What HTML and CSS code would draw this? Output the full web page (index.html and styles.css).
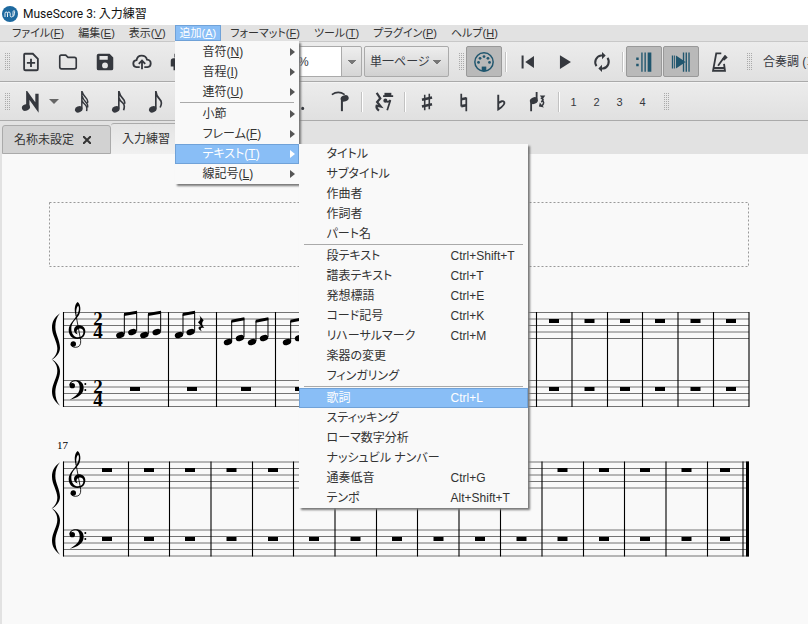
FILE: index.html
```html
<!DOCTYPE html>
<html lang="ja">
<head>
<meta charset="utf-8">
<title>MuseScore 3: 入力練習</title>
<link rel="stylesheet" href="styles.css">
</head>
<body>
<header class="titlebar">
  <svg class="logo" viewBox="0 0 16 16"><circle cx="8" cy="8" r="8" fill="#1d699f"/><path d="M3 11V7.500Q3 6 4.200 6T5.500 7.500V11M5.500 7.500Q5.500 6 6.800 6T8.200 7.500V9.500Q8.200 11 9.500 11T11 9.500V6.500Q11 5 12 4.500Q13 5 12.500 7.500L11.500 10.500" fill="none" stroke="#fff" stroke-width=".9"/></svg>
  <h1>MuseScore 3: 入力練習</h1>
</header>

<nav class="menubar">
  <ul>
    <li><button>ファイル(<u>F</u>)</button></li>
    <li><button>編集(<u>E</u>)</button></li>
    <li><button>表示(<u>V</u>)</button></li>
    <li class="open"><button>追加(<u>A</u>)</button>
      <ul class="menu add-menu">
        <li><button class="more">音符(<u>N</u>)</button></li>
        <li><button class="more">音程(<u>I</u>)</button></li>
        <li><button class="more">連符(<u>U</u>)</button></li>
        <li class="rule"></li>
        <li><button class="more">小節</button></li>
        <li><button class="more">フレーム(<u>F</u>)</button></li>
        <li class="parent"><button class="more active">テキスト(<u>T</u>)</button>
          <ul class="menu text-menu">
            <li><button>タイトル</button></li>
            <li><button>サブタイトル</button></li>
            <li><button>作曲者</button></li>
            <li><button>作詞者</button></li>
            <li><button>パート名</button></li>
            <li class="rule"></li>
            <li><button>段テキスト<kbd>Ctrl+Shift+T</kbd></button></li>
            <li><button>譜表テキスト<kbd>Ctrl+T</kbd></button></li>
            <li><button>発想標語<kbd>Ctrl+E</kbd></button></li>
            <li><button>コード記号<kbd>Ctrl+K</kbd></button></li>
            <li><button>リハーサルマーク<kbd>Ctrl+M</kbd></button></li>
            <li><button>楽器の変更</button></li>
            <li><button>フィンガリング</button></li>
            <li class="rule"></li>
            <li><button class="active">歌詞<kbd>Ctrl+L</kbd></button></li>
            <li><button>スティッキング</button></li>
            <li><button>ローマ数字分析</button></li>
            <li><button>ナッシュビル ナンバー</button></li>
            <li><button>通奏低音<kbd>Ctrl+G</kbd></button></li>
            <li><button>テンポ<kbd>Alt+Shift+T</kbd></button></li>
          </ul>
        </li>
        <li><button class="more">線記号(<u>L</u>)</button></li>
      </ul>
    </li>
    <li><button>フォーマット(<u>F</u>)</button></li>
    <li><button>ツール(<u>T</u>)</button></li>
    <li><button>プラグイン(<u>P</u>)</button></li>
    <li><button>ヘルプ(<u>H</u>)</button></li>
  </ul>
</nav>

<div class="toolbar">
  <span class="grip"></span>
  <button class="tool" aria-label="新規"><svg viewBox="0 0 24 24"><path d="M5 3H14L19.500 8.500V19.500Q19.500 21 18 21H6Q4.500 21 4.500 19.500V4Q4.500 3 5.500 3ZM12 8.500V17.500M7.500 13H16.500" fill="none" stroke="currentColor" stroke-width="2"/></svg></button>
  <button class="tool" aria-label="開く"><svg viewBox="0 0 24 24"><path d="M4.500 4.500H9.500L12 7H19Q21 7 21 9V17.500Q21 19.500 19 19.500H5Q3 19.500 3 17.500V6Q3 4.500 4.500 4.500Z" fill="none" stroke="currentColor" stroke-width="1.800"/></svg></button>
  <button class="tool" aria-label="保存"><svg viewBox="0 0 24 24"><path fill-rule="evenodd" d="M5 3H17L21 7V19Q21 21 19 21H5Q3 21 3 19V5Q3 3 5 3ZM6 5.500V9.500H15V5.500ZM12 12.500A3.200 3.200 0 1 0 12 18.900A3.200 3.200 0 1 0 12 12.500Z" fill="currentColor"/></svg></button>
  <button class="tool" aria-label="オンラインに保存"><svg viewBox="0 0 24 24"><path d="M9.500 17.500H6Q2.500 17 2.500 13.500Q2.500 10.500 6 10Q7 5 11.500 5Q16.500 5 17.500 9.500Q21.500 10 21.500 13.500Q21.500 17 18 17.500H14.500M12 20V11M8.500 14L12 10.500L15.500 14" fill="none" stroke="currentColor" stroke-width="2"/></svg></button>
  <button class="tool" aria-label="印刷"><svg viewBox="0 0 24 24"><path d="M7 3H17V7H7ZM6 8H18Q21 8 21 11V17H18V21H6V17H3V11Q3 8 6 8Z" fill="currentColor"/></svg></button>
  <button class="tool" aria-label="元に戻す"><svg viewBox="0 0 24 24"><path d="M9 5L4 10L9 15M4 10H14Q20 10 20 18" fill="none" stroke="currentColor" stroke-width="2"/></svg></button>
  <button class="tool" aria-label="やり直し"><svg viewBox="0 0 24 24"><path d="M15 5L20 10L15 15M20 10H10Q4 10 4 18" fill="none" stroke="currentColor" stroke-width="2"/></svg></button>
  <select class="combo zoom" aria-label="ズーム"><option>100%</option></select>
  <select class="combo view" aria-label="表示形式"><option>単一ページ</option></select>
  <span class="grip"></span>
  <button class="tool on" aria-label="MIDI 入力"><svg viewBox="0 0 24 24"><circle cx="12" cy="12" r="10" fill="none" stroke="currentColor" stroke-width="1.600"/><g fill="currentColor"><circle cx="6" cy="12.500" r="1.500"/><circle cx="7.700" cy="8" r="1.500"/><circle cx="12" cy="6" r="1.500"/><circle cx="16.300" cy="8" r="1.500"/><circle cx="18" cy="12.500" r="1.500"/><path d="M9.500 17H14.500V22H9.500Z"/></g></svg></button>
  <span class="divider"></span>
  <button class="tool" aria-label="先頭へ"><svg viewBox="0 0 24 24"><path d="M5 5H7.200V19H5ZM18.500 5.500V18.500L9 12Z" fill="currentColor"/></svg></button>
  <button class="tool" aria-label="再生"><svg viewBox="0 0 24 24"><path d="M6.500 4.500L18.500 12L6.500 19.500Z" fill="currentColor"/></svg></button>
  <button class="tool" aria-label="ループ再生"><svg viewBox="0 0 24 24"><path d="M6 16.500A7.500 7.500 0 0 1 11 4.800H13M18 7.500A7.500 7.500 0 0 1 13 19.200H11" fill="none" stroke="currentColor" stroke-width="2.200"/><path d="M12 1V9L16 5ZM12 15V23L8 19Z" fill="currentColor"/></svg></button>
  <span class="divider"></span>
  <button class="tool on" aria-label="リピート再生"><svg viewBox="0 0 24 24"><path d="M9 1.500H10.500V22.500H9ZM12.500 1.500H14V22.500H12.500ZM16 1.500H20V22.500H16ZM3.500 7H6.200V9.700H3.500ZM3.500 14H6.200V16.700H3.500Z" fill="currentColor"/></svg></button>
  <button class="tool on" aria-label="再生位置を追う"><svg viewBox="0 0 24 24"><path d="M2 5H3.500V19H2ZM4.500 5H5.500V19H4.500ZM6.500 5L17 12L6.500 19ZM14 1.500H15.500V22.500H14ZM17 1.500H18.500V22.500H17ZM20 1.500H21.500V22.500H20Z" fill="currentColor"/></svg></button>
  <button class="tool" aria-label="メトロノーム"><svg viewBox="0 0 24 24"><path d="M14.500 2.500H9L5.500 21.500H18.500L17.500 14M6.500 18.500H18M11 16L19 5" fill="none" stroke="currentColor" stroke-width="2"/><path d="M15.500 8.500L19 4.500L21.500 7L17.500 10.500Z" fill="currentColor"/></svg></button>
  <span class="grip"></span>
  <span class="pitch">合奏調 (コンサートピッチ)</span>
</div>

<div class="toolbar notes">
  <span class="grip"></span>
  <button class="tool" aria-label="音符入力"><svg viewBox="0 0 24 24"><path d="M8.500 17V4L18.500 18V3" fill="none" stroke="currentColor" stroke-width="3.600"/><ellipse cx="6.500" cy="18" rx="4.500" ry="3.500" transform="rotate(-20 6.500 18)" fill="currentColor"/></svg></button>
  <button class="drop" aria-label="入力モード"></button>
  <button class="tool" aria-label="32分音符"><svg viewBox="0 0 24 24"><ellipse cx="8.500" cy="20" rx="4.300" ry="3.300" transform="rotate(-25 8.500 20)" fill="currentColor"/><path d="M11.800 19V0Q13 4 16 7T18 13M11.800 5Q13 9 16 12T18 18M11.800 10Q13 13 15.500 15T17 22" fill="none" stroke="currentColor" stroke-width="1.600"/></svg></button>
  <button class="tool" aria-label="16分音符"><svg viewBox="0 0 24 24"><ellipse cx="8.500" cy="20" rx="4.300" ry="3.300" transform="rotate(-25 8.500 20)" fill="currentColor"/><path d="M11.800 19V0Q13 5 16 8T18 14M11.800 7Q13 11 16 13T17 21" fill="none" stroke="currentColor" stroke-width="1.800"/></svg></button>
  <button class="tool" aria-label="8分音符"><svg viewBox="0 0 24 24"><ellipse cx="8.500" cy="20" rx="4.300" ry="3.300" transform="rotate(-25 8.500 20)" fill="currentColor"/><path d="M11.800 19V0Q12.500 6 16 9T16.500 18" fill="none" stroke="currentColor" stroke-width="1.800"/></svg></button>
  <button class="tool" aria-label="4分音符"><svg viewBox="0 0 24 24"><ellipse cx="10.500" cy="19" rx="4" ry="3" fill="currentColor"/><path d="M13.500 19V1" stroke="currentColor" stroke-width="1.800"/></svg></button>
  <button class="tool" aria-label="2分音符"><svg viewBox="0 0 24 24"><ellipse cx="10.500" cy="19" rx="3" ry="2" fill="none" stroke="currentColor"/><path d="M13.500 19V1" stroke="currentColor" stroke-width="1.800"/></svg></button>
  <button class="tool" aria-label="全音符"><svg viewBox="0 0 24 24"><ellipse cx="12" cy="19" rx="4" ry="2" fill="none" stroke="currentColor" stroke-width="2"/></svg></button>
  <button class="tool" aria-label="付点"><svg viewBox="0 0 24 24"><circle cx="10.500" cy="19" r="1.700" fill="currentColor"/></svg></button>
  <button class="tool" aria-label="タイ"><svg viewBox="0 0 24 24"><path d="M2 4Q9 -1 16 4" fill="none" stroke="currentColor" stroke-width="1.700"/><path d="M13 22V8" stroke="currentColor" stroke-width="2.200"/><ellipse cx="16" cy="8" rx="4.500" ry="3.300" transform="rotate(-20 16 8)" fill="currentColor"/></svg></button>
  <span class="divider"></span>
  <button class="tool" aria-label="休符"><svg viewBox="0 0 24 24"><path d="M4 2L8 8L4.500 12L8.500 17L4 16Q3 19 6.500 21.500" fill="none" stroke="currentColor" stroke-width="2.400"/><path d="M12.500 2H20V6H12.500Z" fill="currentColor"/><path d="M11 5.500H22M13.500 10Q15.500 13.500 19 10L15.500 21" fill="none" stroke="currentColor" stroke-width="1.900"/><circle cx="13.500" cy="10.500" r="2.200" fill="currentColor"/></svg></button>
  <span class="divider"></span>
  <button class="tool" aria-label="シャープ"><svg viewBox="0 0 24 24"><path d="M9.500 4V21M14.500 3V20" fill="none" stroke="currentColor" stroke-width="1.700"/><path d="M6.500 9.500L17.500 7M6.500 17L17.500 14.500" fill="none" stroke="currentColor" stroke-width="2.800"/></svg></button>
  <button class="tool" aria-label="ナチュラル"><svg viewBox="0 0 24 24"><path d="M9 3V17M14.500 7V22" fill="none" stroke="currentColor" stroke-width="1.900"/><path d="M9 9L14.500 8M9 16.500L14.500 15.500" fill="none" stroke="currentColor" stroke-width="2.800"/></svg></button>
  <button class="tool" aria-label="フラット"><svg viewBox="0 0 24 24"><path d="M9 4V20Q17 15 15.500 12Q13.500 9.500 9 13.500" fill="none" stroke="currentColor" stroke-width="2.100"/></svg></button>
  <button class="tool" aria-label="符幹を反転"><svg viewBox="0 0 24 24"><path d="M4.500 22V10M10.500 9V1" stroke="currentColor" stroke-width="2"/><ellipse cx="7.500" cy="10.500" rx="4.500" ry="3.500" transform="rotate(-25 7.500 10.500)" fill="currentColor"/><path d="M15 8Q20 9 15.500 12M16 10Q20 12 16.500 16" fill="none" stroke="currentColor" stroke-width="1.700"/><path d="M13 17L14 12.500L18.500 18ZM14 5L20 5L17 9Z" fill="currentColor"/></svg></button>
  <span class="divider"></span>
  <button class="voice">1</button><button class="voice">2</button><button class="voice">3</button><button class="voice">4</button>
  <span class="grip"></span>
</div>

<div class="tabs">
  <button class="tab">名称未設定<svg viewBox="0 0 8 8"><path d="M0 0L8 8M8 0L0 8" stroke="#333" stroke-width="2"/></svg></button>
  <button class="tab current">入力練習<svg viewBox="0 0 8 8"><path d="M0 0L8 8M8 0L0 8" stroke="#333" stroke-width="2"/></svg></button>
</div>

<main class="canvas">
  <svg class="score" viewBox="2 154 806 470">
    <defs>
      <path id="staff" d="M63 0H749M63 6.500H749M63 13H749M63 19.500H749M63 26H749" stroke="#000" stroke-opacity=".6" stroke-width=".9"/>
      <path id="rest" d="M-5 0H5V4H-5Z"/>
      <ellipse id="head" rx="13" ry="9" transform="rotate(-20)"/>
      <g id="clefs" transform="translate(40 295) scale(.33333)">
        <path d="M60 55C42 68 36 82 36 98C36 120 52 140 52 160C52 176 44 186 35 194C50 186 60 172 60 158C60 136 46 118 46 96C46 80 50 66 60 55Z"/>
        <path d="M60 332C42 319 36 305 36 289C36 267 52 247 52 227C52 211 44 201 35 193C50 201 60 215 60 229C60 251 46 269 46 291C46 307 50 321 60 332Z"/>
        <path d="M107 62C101 40 106 26 113 21C122 28 124 46 117 60C111 71 95 80 94 98C93 116 103 127 114 127C126 127 131 118 130 109C129 101 122 99 117 101C108 104 108 113 114 118C103 117 98 103 106 95C116 86 135 92 136 108C136 123 127 132 112 132C96 132 86 120 86 105C87 85 105 73 111 60C116 51 119 40 115 32C110 36 107 46 110 61Z"/>
        <path d="M108 60L122 136Q124 157 106 157Q92 156 93 146" fill="none" stroke="#000" stroke-width="2.500"/>
        <circle cx="100" cy="147" r="8"/>
        <path d="M88 272C88 261 98 256 107 256C121 256 131 264 131 279C131 298 113 309 89 314C108 303 119 294 119 278C119 265 113 259 106 259C98 259 93 263 93 268Z"/>
        <circle cx="97" cy="272" r="8"/><circle cx="136" cy="267" r="3"/><circle cx="136" cy="285" r="3"/>
      </g>
    </defs>
    <rect x="49.500" y="202.500" width="699" height="64" fill="none" stroke="#999" stroke-dasharray="2 2"/>
    <use href="#staff" y="312.500"/><use href="#staff" y="380.500"/>
    <use href="#staff" y="462"/><use href="#staff" y="530"/>
    <g fill="none" stroke="#000" stroke-width="1.100">
      <path d="M63.500 312V407M168.500 312V407M216.500 312V407M275.500 312V407M334.500 312V407M394.500 312V407M430.500 312V407M465.500 312V407M501.500 312V407M536.500 312V407M572 312V407M607.500 312V407M642.500 312V407M678 312V407M713.500 312V407M749 312V407"/>
      <path d="M63.500 461.500V556.500M128.500 461.500V556.500M169.500 461.500V556.500M211 461.500V556.500M252.500 461.500V556.500M293.500 461.500V556.500M335 461.500V556.500M376.500 461.500V556.500M417.500 461.500V556.500M459 461.500V556.500M500.500 461.500V556.500M542 461.500V556.500M583.500 461.500V556.500M624.500 461.500V556.500M666 461.500V556.500M707.500 461.500V556.500M743 461.500V556.500"/>
      <path d="M747.500 461.500V556.500" stroke-width="3"/>
    </g>
    <use href="#clefs"/><use href="#clefs" y="149"/>
    <g class="time"><text x="98" y="325">2</text><text x="98" y="338">4</text><text x="98" y="393">2</text><text x="98" y="406">4</text></g>
    <text class="number" x="57" y="449">17</text>
    <g transform="translate(40 295) scale(.33333)">
      <use href="#head" x="241" y="120"/><use href="#head" x="277" y="111"/><use href="#head" x="313" y="120"/><use href="#head" x="350" y="111"/>
      <use href="#head" x="417" y="120"/><use href="#head" x="452" y="111"/>
      <use href="#head" x="564" y="141"/><use href="#head" x="600" y="129"/><use href="#head" x="636" y="141"/><use href="#head" x="672" y="129"/>
      <use href="#head" x="741" y="141"/><use href="#head" x="777" y="129"/>
      <path d="M253 117V58M290 108V50M325 117V58M362 108V50M429 117V58M464 108V50M575 138V78M612 126V70M648 138V78M684 126V70M752 138V78M789 126V70" fill="none" stroke="#000" stroke-width="3"/>
      <path d="M252 54L291 47V56L252 63ZM324 54L363 47V56L324 63ZM428 54L465 47V56L428 63ZM574 74L613 67V76L574 83ZM647 74L685 67V76L647 83ZM751 74L790 67V76L751 83Z"/>
      <path d="M478 61L491 76C484 84 486 90 493 99C483 96 479 101 486 109C473 104 472 94 484 94L474 82C482 76 483 70 478 61Z"/>
    </g>
    <use href="#rest" x="135" y="387"/><use href="#rest" x="192" y="387"/><use href="#rest" x="246" y="387"/><use href="#rest" x="300" y="387"/>
    <use href="#rest" x="554" y="319"/><use href="#rest" x="589.500" y="319"/><use href="#rest" x="625" y="319"/><use href="#rest" x="660" y="319"/><use href="#rest" x="695.500" y="319"/><use href="#rest" x="731" y="319"/>
    <use href="#rest" x="554" y="387"/><use href="#rest" x="589.500" y="387"/><use href="#rest" x="625" y="387"/><use href="#rest" x="660" y="387"/><use href="#rest" x="695.500" y="387"/><use href="#rest" x="731" y="387"/>
    <g id="rests17">
      <use href="#rest" x="107" y="468"/><use href="#rest" x="149" y="468"/><use href="#rest" x="190" y="468"/><use href="#rest" x="231.500" y="468"/><use href="#rest" x="273" y="468"/><use href="#rest" x="314" y="468"/><use href="#rest" x="355.500" y="468"/><use href="#rest" x="397" y="468"/><use href="#rest" x="438.500" y="468"/><use href="#rest" x="480" y="468"/><use href="#rest" x="521.500" y="468"/><use href="#rest" x="562.500" y="468"/><use href="#rest" x="604" y="468"/><use href="#rest" x="645" y="468"/><use href="#rest" x="686.500" y="468"/><use href="#rest" x="725" y="468"/>
    </g>
    <use href="#rests17" y="69"/>
  </svg>
</main>
</body>
</html>
```
FILE: styles.css
```css
* { box-sizing: border-box; }

body {
  margin: 0;
  min-height: 100vh;
  display: flex;
  flex-direction: column;
  background: #e2e2e2;
  color: #333;
  font: 12px/20px "Liberation Sans", "Noto Sans CJK JP", sans-serif;
  font-feature-settings: "palt";
  overflow: hidden;
}

button, select, kbd {
  font: inherit;
  font-feature-settings: inherit;
  color: inherit;
  margin: 0;
  padding: 0;
  border: 0;
  background: none;
  white-space: nowrap;
}

ul { list-style: none; margin: 0; padding: 0; }

u { text-underline-offset: 1px; }

/* Title bar */
.titlebar {
  display: flex;
  align-items: center;
  gap: 5px;
  height: 25px;
  padding: 2px 2px 0;
  background: #fff;
  color: #111;
}

.titlebar h1 {
  margin: 0;
  font: 12px/20px Roboto, "Noto Sans CJK JP", sans-serif;
}

.logo { width: 16px; height: 16px; }

/* Menus */
.menubar { border-bottom: 1px solid #c8c8c8; }

.menubar > ul { display: flex; gap: 4px; padding-left: 7px; }

.menubar > ul > li > button {
  display: block;
  height: 16px;
  padding: 0 5px;
  font-size: 11px;
  line-height: 16px;
}

.open { position: relative; }

.open > button { background: #89bef6; color: #fff; box-shadow: inset 0 0 0 1px #70a2d8; }

.menu {
  position: absolute;
  z-index: 2;
  background: #f9f9f9;
  box-shadow: 2px 2px 2px #777;
}

.add-menu { top: 100%; left: 0; width: 124px; padding-top: 1px; }

.text-menu { top: 0; left: 100%; width: 229px; }

.parent { position: relative; }

.menu button {
  display: flex;
  align-items: center;
  width: 100%;
  height: 20px;
  padding-left: 28px;
  text-align: left;
}

.menu .more::after {
  content: "";
  margin-left: auto;
  margin-right: 4px;
  border: 4px solid transparent;
  border-left: 5px solid #555;
  border-right: 0;
}

.menu .active { background: #89bef6; color: #fff; box-shadow: inset 0 0 0 1px #70a2d8; }

.menu .more.active::after { border-left-color: #fff; }

.menu kbd { margin-left: auto; width: 77px; }

.rule { height: 2px; margin: 0 5px; border-top: 1px solid #aaa; }

/* Toolbars */
.toolbar {
  display: flex;
  align-items: center;
  height: 40px;
  padding-left: 5px;
  border-bottom: 1px solid #aaa;
  background: linear-gradient(#ececec, #e0e0e0);
  color: #35383e;
  white-space: nowrap;
  overflow: hidden;
}

.notes { height: 39px; border-top: 1px solid #f4f4f4; }

.grip {
  flex: none;
  width: 5px;
  height: 18px;
  margin-right: 2px;
  background: linear-gradient(#b4b4b4, #b4b4b4) 0 0 / 1px 1px;
  background: conic-gradient(transparent 75%, #aaa 0) 0 0 / 2px 2px;
}

.tool {
  flex: none;
  display: grid;
  place-items: center;
  width: 37px;
  height: 31px;
}

.tool svg { width: 22px; height: 22px; display: block; }

.on {
  width: 36px;
  margin-right: 1px;
  border: 1px solid #999;
  border-radius: 2px;
  background: #b9b9b9;
  color: #20566e;
}

.divider { flex: none; width: 1px; height: 20px; margin: 0 3px 0 2px; background: #c2c2c2; box-shadow: 1px 0 #fff; }

.combo {
  flex: none;
  height: 31px;
  padding-left: 5px;
  border: 1px solid #aaa;
  border-radius: 2px;
  appearance: none;
}

.zoom {
  width: 90px;
  margin: 0 2px 0 1px;
  background:
    linear-gradient(#777, #777) right 5px top 13px / 8px 1px no-repeat,
    linear-gradient(#777, #777) right 6px top 14px / 6px 1px no-repeat,
    linear-gradient(#777, #777) right 7px top 15px / 4px 1px no-repeat,
    linear-gradient(#777, #777) right 8px top 16px / 2px 1px no-repeat,
    linear-gradient(#aaa, #aaa) right 19px top / 1px 100% no-repeat,
    linear-gradient(#eee, #d5d5d5) right / 19px 100% no-repeat,
    #fff;
}

.view {
  width: 85px;
  background:
    linear-gradient(#777, #777) right 7px top 13px / 8px 1px no-repeat,
    linear-gradient(#777, #777) right 8px top 14px / 6px 1px no-repeat,
    linear-gradient(#777, #777) right 9px top 15px / 4px 1px no-repeat,
    linear-gradient(#777, #777) right 10px top 16px / 2px 1px no-repeat,
    linear-gradient(#eee, #d0d0d0);
}

.combo + .grip, .tool + .grip, .voice + .grip { margin-left: 10px; }

.pitch { margin-left: 9px; }

.drop { width: 10px; height: 5px; margin-right: 4px; background: #666; clip-path: polygon(0 0, 100% 0, 50% 100%); }

.voice { width: 23px; font-size: 11px; text-align: center; }

/* Document tabs */
.tabs {
  display: flex;
  align-items: flex-end;
  height: 33px;
  padding-left: 2px;
}

.tab {
  display: flex;
  align-items: center;
  gap: 9px;
  height: 29px;
  padding: 0 19px 0 11px;
  border: 1px solid #aaa;
  border-radius: 3px 3px 0 0;
  background: #d2d2d2;
}

.tab svg { width: 8px; height: 8px; }

.tab.current { height: 31px; border-bottom: 0; border-left: 0; background: linear-gradient(#e4e4e4, #f0f0f0); }

/* Score */
.canvas { flex: 1; margin-left: 2px; background: #f9f9f9; }

.score { display: block; width: 806px; }

.time { font: bold 19px "Liberation Serif", serif; text-anchor: middle; }

.number { font: 11px "Liberation Serif", serif; }
```
